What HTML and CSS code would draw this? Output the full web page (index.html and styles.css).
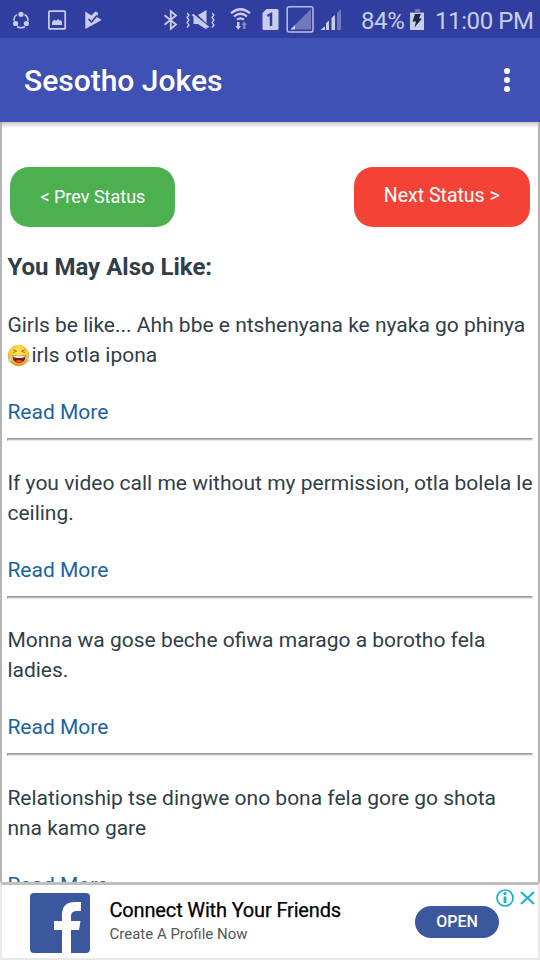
FILE: index.html
```html
<!DOCTYPE html>
<html lang="st">
<head>
<meta charset="utf-8">
<title>Sesotho Jokes</title>
<link rel="stylesheet" href="styles.css">
</head>
<body>
<div class="statusbar">
  <svg class="notices" width="110" height="38" viewBox="0 0 110 38">
    <g fill="none" stroke="#c9cdea" stroke-width="1.500"><path d="M17 14.500Q13.500 17 14 21M24.500 14.500Q28.500 17 28 21M17 26.800Q21 28.500 25 26.800"/></g>
    <g fill="#c9cdea"><circle cx="21" cy="14.300" r="2.600"/><circle cx="15.600" cy="23.500" r="2.600"/><circle cx="26.400" cy="23.500" r="2.600"/></g>
    <rect x="48.900" y="11.100" width="16.300" height="17.800" rx="1" fill="none" stroke="#c9cdea" stroke-width="1.700"/>
    <path d="M52 25v-3l2.500-2.500 1.500 1.500 2-2 1.500 1.500 1-.5 1.500 2v3z" fill="#c9cdea"/>
    <path d="M85.300 11.500l6 4L95.500 11.500l2.800 1.500-1.500 4 5 3L85.300 29z" fill="#c9cdea"/>
    <path d="M88.500 19l3 3 5.500-6.500" fill="none" stroke="#303f9f" stroke-width="1.700"/>
  </svg>
  <svg class="signals" width="185" height="38" viewBox="160 0 185 38">
    <path d="M164.500 15.300l11.500 9.200-5.200 4.300V11.200l5.200 4.300-11.500 9.200" fill="none" stroke="#c9cdea" stroke-width="1.800"/>
    <path d="M193.500 16.500V24h4.500l8.500 5.500v-3zM198 15l8.500-5v13.500z" fill="#c9cdea"/>
    <path d="M192.500 14.500L208.500 27.500" stroke="#c9cdea" stroke-width="2.200"/>
    <path d="M187 13l2 2-2 2.500 2 2.500-2 2.500 2 2.500-2 2.500M212 13l2 2-2 2.500 2 2.500-2 2.500 2 2.500-2 2.500" fill="none" stroke="#c9cdea" stroke-width="1.300"/>
    <g fill="none" stroke="#c9cdea" stroke-width="2.200"><path d="M231 13.200Q240.500 5.300 250 13.200M234 16.500Q240.500 11 247 16.500M237 19.700Q240.500 16.900 244 19.700"/></g>
    <path d="M237 22v4h-1.500l2.700 3.800 2.800-3.800h-1.500v-4z" fill="#c9cdea"/>
    <path d="M243 29v-4h-1.500l2.700-3.500 2.800 3.500h-1.500v4z" fill="#8088c5"/>
    <path d="M266.500 9H277q1.500 0 1.500 1.500v18q0 1.500-1.500 1.500h-13q-1.500 0-1.500-1.500V13z" fill="#c9cdea"/>
    <path d="M267.300 16l3.700-2v12" fill="none" stroke="#303f9f" stroke-width="2.500"/>
    <rect x="287.200" y="6.800" width="25.800" height="25.200" rx="2" fill="none" stroke="#b9bee2" stroke-width="1.500"/>
    <path d="M290.500 29.500L311 9v20.500z" fill="#7079bc"/><path d="M290.500 29.500l4.500-4.500v4.500z" fill="#c9cdea"/>
    <path d="M320.500 30l4.500-3.800V30zM326 30v-7l3-2.500V30zM331.500 30V18l3.500-3v15z" fill="#c9cdea"/>
    <path d="M337 30V13l4-4v21z" fill="#7079bc"/>
  </svg>
  <span class="charge">84%</span>
  <svg class="battery" width="14" height="22" viewBox="0 0 14 22"><path d="M0 3h14v5H0z" fill="#7079bc"/><path d="M5 0h5v3H5z" fill="#7079bc"/><path d="M0 4h14v17H0z" fill="#c9cdea"/><path d="M5 5h6L9 9.500h3L4.500 18.500l1.500-6H2.500z" fill="#1d2547"/></svg>
  <span class="clock">11:00 PM</span>
</div>
<header class="toolbar">
  <h1 class="title">Sesotho Jokes</h1>
  <svg class="more" width="6" height="24" viewBox="0 0 6 24"><g fill="#fff"><circle cx="3" cy="3" r="3"/><circle cx="3" cy="12" r="3"/><circle cx="3" cy="21" r="3"/></g></svg>
</header>
<main class="page">
  <nav class="pager"><a class="button prev">&lt; Prev Status</a><a class="button next">Next Status &gt;</a></nav>
  <h2 class="heading">You May Also Like:</h2>
  <article class="joke">
    <p class="text">Girls be like... Ahh bbe e ntshenyana ke nyaka go phinya<br><svg class="emoji" width="24" height="24" viewBox="0 0 24 24"><defs><radialGradient id="face" cx=".5" cy=".35" r=".65"><stop offset="0" stop-color="#ffe95c"/><stop offset=".65" stop-color="#fbc537"/><stop offset="1" stop-color="#e08d1b"/></radialGradient></defs><circle cx="11.500" cy="11.500" r="10.700" fill="url(#face)"/><path d="M5.500 11Q12 13 18.500 11 18.500 19 12 19T5.500 11z" fill="#6b2015"/><path d="M6 11.300Q12 13 18 11.300L17.500 13.300Q12 14.500 6.500 13.300z" fill="#fff"/><path d="M8 17.200q4-2.500 8 0-4 2.700-8 0z" fill="#ed4a45"/><path d="M6 5.500l3.500 1.800L6 8.500M18 5.500l-3.500 1.800L18 8.500" fill="none" stroke="#9a6420" stroke-width=".9"/><path d="M4.500 12.500Q0 15 1.500 18q2.500 1 3-5.500M19.500 12.500q4.500 2.500 3 5.500-2.500 1-3-5.500" fill="#a8dcf2"/></svg>irls otla ipona</p>
    <a class="read">Read More</a><hr class="rule">
  </article>
  <article class="joke">
    <p class="text">If you video call me without my permission, otla bolela le<br>ceiling.</p>
    <a class="read">Read More</a><hr class="rule">
  </article>
  <article class="joke">
    <p class="text">Monna wa gose beche ofiwa marago a borotho fela<br>ladies.</p>
    <a class="read">Read More</a><hr class="rule">
  </article>
  <article class="joke">
    <p class="text">Relationship tse dingwe ono bona fela gore go shota<br>nna kamo gare</p>
    <a class="read">Read More</a>
  </article>
</main>
<aside class="ad">
  <svg class="logo" width="60" height="60" viewBox="0 0 60 60"><rect width="60" height="60" rx="4" fill="#3b579d"/><path d="M32 60V37h-8v-9h8v-6q0-13 13-13h6v9h-4q-6 0-6 5v5h9.500l-1.500 9h-8v23z" fill="#fff"/></svg>
  <div class="copy"><div class="ad-title">Connect With Your Friends</div><div class="ad-text">Create A Profile Now</div></div>
  <a class="open">OPEN</a>
  <svg class="choices" width="40" height="20" viewBox="0 0 40 20"><g fill="none" stroke="#13b3cd" stroke-width="1.700"><circle cx="10" cy="10" r="8"/><path d="M26 4l13 12M39 4L26 16" stroke-width="2"/></g><circle cx="10" cy="5.700" r="1.600" fill="#13b3cd"/><path d="M8.600 8.500h2.800V15H8.600z" fill="#13b3cd"/></svg>
</aside>
</body>
</html>
```
FILE: styles.css
```css
* { box-sizing: border-box; }
body { margin: 0; width: 540px; height: 960px; overflow: hidden; display: flex; flex-direction: column; background: #fff; font-family: Roboto, sans-serif; color: #303e48; }
h1, h2, p { margin: 0; }
svg { display: block; flex: none; }
.statusbar { height: 38px; flex: none; display: flex; align-items: center; background: #303f9f; color: #c9cdea; font-size: 24px; letter-spacing: -.4px; white-space: nowrap; }
.signals { margin-left: 50px; }
.charge { width: 49px; margin-left: 16px; margin-top: 4px; }
.battery { margin-top: 1px; }
.clock { margin-left: 11px; margin-top: 4px; }
.toolbar { height: 84px; flex: none; display: flex; align-items: center; justify-content: space-between; padding: 0 30px 0 24px; background: #3f51b5; color: #fff; }
.title { font-size: 30px; font-weight: 500; line-height: 36px; margin-top: 2px; }
.page { height: 760px; flex: none; overflow: hidden; padding: 45px 0 0 5.4px; border-left: 2px solid #b5b5b5; border-right: 2px solid #b5b5b5; background: linear-gradient(#c8c8c8, #ececec 4px, #fff 6px); }
.pager { display: flex; justify-content: space-between; padding: 0 8.5px 0 3px; }
.button { height: 60px; border-radius: 19px; color: #fff; text-align: center; white-space: nowrap; }
.prev { width: 165px; background: #4caf50; font-size: 18px; line-height: 60px; }
.next { width: 175.5px; background: #f44336; font-size: 19.5px; line-height: 57px; }
.heading { margin-top: 25px; font-size: 24px; line-height: 30px; font-weight: 700; }
.heading + .joke { margin-top: 28px; }
.joke { height: 157.5px; }
.text { font-size: 21px; line-height: 30px; white-space: nowrap; }
.emoji { display: inline-block; vertical-align: -6px; }
.read { display: block; margin-top: 27px; font-size: 21px; line-height: 30px; color: #1b62a5; }
.rule { height: 3px; margin: 11px 5px 0 0; border: 1px solid #999; border-right-color: #eee; border-bottom-color: #e5e5e5; background: #bbb; }
.ad { position: relative; height: 78px; flex: none; display: flex; align-items: flex-start; border: 2px solid #e8e8e8; border-top: 3px solid #bfbfbf; padding: 8px 0 0 28px; background: #fff; }
.copy { width: 306px; margin-left: 19.5px; white-space: nowrap; }
.ad-title { margin-top: 5px; color: #000; font-size: 20px; line-height: 24px; letter-spacing: -.16px; -webkit-text-stroke: .25px #000; }
.ad-text { margin-top: 2px; color: #555; font-size: 15px; line-height: 20px; }
.open { width: 84px; height: 32px; margin-top: 13px; margin-left: -.5px; border-radius: 16px; background: #3b579d; color: #fff; text-align: center; font-size: 16px; font-weight: 500; line-height: 32px; }
.choices { position: absolute; right: 3px; top: 3px; }
```
